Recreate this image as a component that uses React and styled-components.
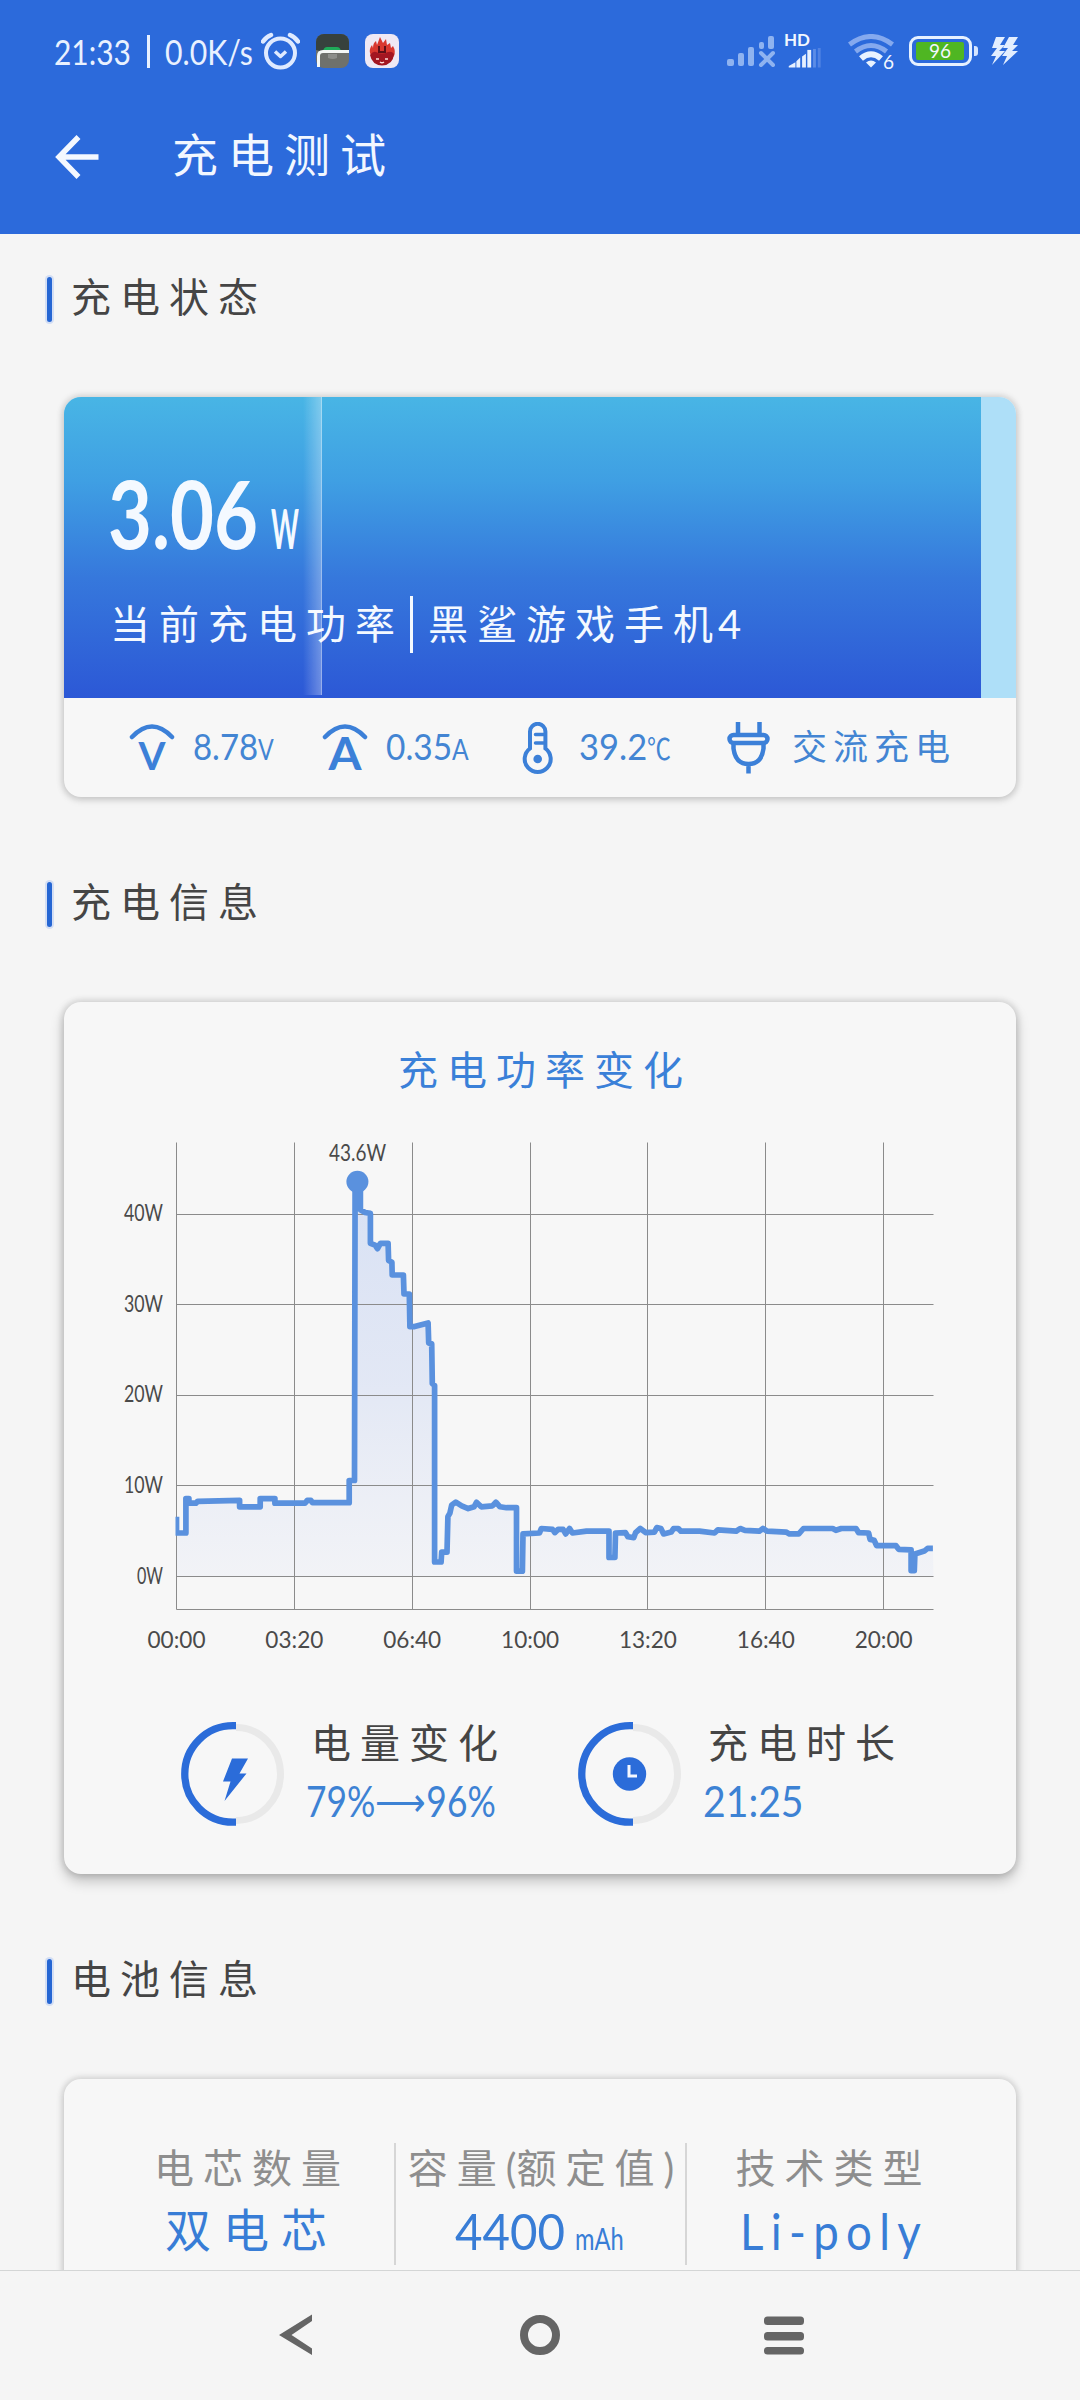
import React, { useLayoutEffect, useRef, useState } from 'react'
import styled, { createGlobalStyle } from 'styled-components'

const GlobalStyle = createGlobalStyle`
  * {
    box-sizing: border-box;
  }
  body {
    margin: 0;
    background: #f5f5f5;
    font-family: Lato, "Noto Sans CJK SC", sans-serif;
  }
`

const Screen = styled.div`
  width: 1080px;
  height: 2400px;
  display: flex;
  flex-direction: column;
  background: #f5f5f5;
  overflow: hidden;
`

/* header */

const Header = styled.header`
  height: 234px;
  flex-shrink: 0;
  background: #2c6adb;
  color: #f2f7ff;
`

const StatusBar = styled.div`
  height: 104px;
  padding: 0 61px 2px 54px;
  display: flex;
  align-items: center;
`

const StatusText = styled.div`
  display: flex;
  align-items: center;
  font-size: 35px;
  line-height: 50px;
  color: #e9f1ff;
`

const StatusDivider = styled.span`
  width: 3px;
  height: 33px;
  margin: 0 15px 0 16px;
  background: #e9f1ff;
`

const StatusIcons = styled.div`
  display: flex;
  align-items: center;
  margin-left: ${(props) => props.$left || '8px'};
  gap: 16px;
`

const SignalGroup = styled.div`
  display: flex;
  flex-direction: column;
  width: 38px;
  height: 34px;
  margin-left: -6px;
`

const HdTag = styled.span`
  height: 12px;
  font-size: 17px;
  line-height: 12px;
  font-weight: 700;
  margin-bottom: 2px;
  margin-left: -1px;
`

const WifiGroup = styled.div`
  display: flex;
  position: relative;
  margin-left: 9px;
`

const WifiGeneration = styled.span`
  position: absolute;
  right: 0;
  bottom: -4px;
  font-size: 19px;
  line-height: 20px;
`

const Battery = styled.div`
  display: flex;
  align-items: center;
  margin: 0 -3px 0 -1px;
`

const BatteryBody = styled.div`
  width: 63px;
  height: 30px;
  padding: 3px;
  border: 3px solid #e6f1ff;
  border-radius: 9px;
`

const BatteryLevel = styled.div`
  width: 48px;
  height: 18px;
  margin-left: 1px;
  border-radius: 2px;
  background: #4fb622;
  font-size: 19px;
  line-height: 18px;
  text-align: center;
`

const BatteryTip = styled.div`
  width: 4px;
  height: 10px;
  margin-left: 2px;
  border-radius: 0 3px 3px 0;
  background: #d5e5ff;
`

const TitleBar = styled.div`
  height: 106px;
  padding-left: 55px;
  display: flex;
  align-items: center;
`

const PageTitle = styled.h1`
  margin: -4px 0 0 73px;
  font-size: 46px;
  line-height: 60px;
  font-weight: 400;
  letter-spacing: 10px;
`

/* sections */

const Content = styled.main`
  flex: 1;
  min-height: 0;
  padding: 43px 64px 0;
  display: flex;
  flex-direction: column;
  overflow: hidden;
`

const SectionTitle = styled.h2`
  flex-shrink: 0;
  display: flex;
  align-items: center;
  height: 45px;
  margin: 0 0 75px -17px;
  font-size: 40px;
  line-height: 40px;
  font-weight: 400;
  letter-spacing: 9px;
  color: #454545;

  &::before {
    content: '';
    width: 5px;
    height: 45px;
    margin-right: 19px;
    border-radius: 3px;
    background: #2566d3;
    box-shadow: 0 0 0 2px #d3def4;
  }
`

const SectionText = styled.span`
  margin-top: -5px;
`

const Card = styled.section`
  flex-shrink: 0;
  height: ${(props) => props.$height}px;
  margin-bottom: 85px;
  border-radius: 17px;
  background: #f7f7f7;
  box-shadow: 0 0 6px 2px rgba(0, 0, 0, 0.13),
    0 ${(props) => (props.$raised ? '7px 14px' : '3px 9px')} rgba(0, 0, 0, ${(props) => (props.$raised ? 0.22 : 0.1)});
  overflow: hidden;
`

/* status card */

const PowerTrack = styled.div`
  height: 301px;
  background: #aedff8;
`

const PowerLevel = styled.div`
  position: relative;
  width: 917px;
  height: 301px;
  padding: 66px 0 0 44px;
  background: linear-gradient(#48b5e5 0%, #3f9fe3 28%, #3678dc 60%, #2c58d6 100%);
  color: #f4f9ff;
`

const Shine = styled.div`
  position: absolute;
  top: 0;
  left: 239px;
  width: 19px;
  height: 298px;
  border-right: 1px solid rgba(255, 255, 255, 0.5);
  background: linear-gradient(90deg, rgba(255, 255, 255, 0), rgba(255, 255, 255, 0.3));
`

const PowerValue = styled.div`
  display: flex;
  align-items: baseline;
  height: 100px;
  line-height: 100px;
  font-size: 94px;
  font-weight: 700;
`

const PowerUnit = styled.span`
  margin-left: 13px;
  font-size: 55px;
`

const PowerLabel = styled.div`
  display: flex;
  align-items: center;
  height: 56px;
  margin-top: 33px;
  margin-left: 2px;
  font-size: 40px;
  line-height: 56px;
  letter-spacing: 9px;
  white-space: nowrap;
`

const LabelBar = styled.span`
  width: 3px;
  height: 57px;
  margin: 0 15px 0 6px;
  background: #f4f9ff;
`

const Tight = styled.span`
  letter-spacing: ${(props) => props.$gap || 0};
`

const Metrics = styled.div`
  height: 99px;
  padding-left: 65px;
  display: grid;
  grid-template-columns: 193px 193px 211px 1fr;
  align-items: center;
`

const Metric = styled.div`
  display: flex;
  align-items: center;
  gap: 18px;
  font-size: 36px;
  line-height: 50px;
  color: #4385d3;
`

const MetricValue = styled.div`
  display: flex;
  align-items: baseline;
`

const MetricText = styled.div`
  margin: -3px 0 0 2px;
  font-size: 35px;
  letter-spacing: 6px;
`

const MetricUnit = styled.span`
  font-size: 29px;
`

const GaugeSvg = styled.svg`
  margin-bottom: -10px;
`

/* chart card */

const ChartTitle = styled.h3`
  margin: 0;
  padding: 40px 0 0 10px;
  font-size: 40px;
  line-height: 56px;
  font-weight: 400;
  letter-spacing: 9px;
  text-align: center;
  color: #3a80d8;
`

const ChartSvg = styled.svg`
  display: block;
  margin: 32px 0 0 50px;
  font-size: 24px;
  fill: #4a4a4a;
`

const Stats = styled.div`
  display: grid;
  grid-template-columns: 397px 1fr;
  padding: 55px 0 0 117px;
`

const Stat = styled.div`
  display: flex;
`

const RingSvg = styled.svg`
  margin: 7px 21px 0 0;
`

const StatLabel = styled.div`
  padding-left: 5px;
  font-size: 40px;
  line-height: 56px;
  letter-spacing: 9px;
  color: #454545;
`

const StatValue = styled.div`
  display: flex;
  font-size: 43px;
  line-height: 60px;
  color: #3d82d4;
`

/* battery info card */

const InfoGrid = styled.div`
  display: grid;
  grid-template-columns: 290px 291px 291px;
  padding: 64px 0 0 40px;
`

const InfoCell = styled.div`
  height: 122px;
  padding-left: ${(props) => props.$inset || 0}px;
  text-align: center;
  white-space: nowrap;

  & + & {
    border-left: 2px solid #d6d6d6;
  }
`

const InfoLabel = styled.div`
  font-size: 40px;
  line-height: 51px;
  letter-spacing: 9px;
  color: #8e8e8e;
`

const InfoValue = styled.div`
  display: flex;
  justify-content: center;
  align-items: baseline;
  margin-top: 6px;
  font-size: ${(props) => props.$size || '50px'};
  line-height: ${(props) => props.$line || '62px'};
  letter-spacing: ${(props) => props.$spacing || 0};
  color: #387dd6;
`

const InfoUnit = styled.span`
  margin: 0 4px 0 10px;
  font-size: 30px;
`

/* navigation */

const NavBar = styled.nav`
  flex-shrink: 0;
  height: 130px;
  padding-bottom: 2px;
  border-top: 1px solid #d4d6d6;
  display: flex;
  justify-content: center;
  align-items: center;
  gap: 204px;
  color: #656565;
`

const FitBox = styled.span`
  display: inline-block;
  width: ${(props) => props.$width}px;
  white-space: nowrap;
  text-align: left;
`

const FitInner = styled.span`
  display: inline-block;
  transform-origin: 0 50%;
`

// narrows the text until it takes exactly the given width
function FitText({ width, children }) {
  const ref = useRef(null)
  const [scale, setScale] = useState(1)

  useLayoutEffect(() => {
    setScale(width / ref.current.offsetWidth)
  }, [width])

  return (
    <FitBox $width={width}>
      <FitInner ref={ref} style={{ transform: `scaleX(${scale})` }}>{children}</FitInner>
    </FitBox>
  )
}

const AlarmIcon = () => (
  <svg width="39" height="38" viewBox="0 0 39 38" fill="none" stroke="#dfeaff">
    <circle cx="19.5" cy="21" r="14.5" strokeWidth="4" />
    <path d="M14 19.5l5.5 5 5.5-5" strokeWidth="3.5" strokeLinejoin="round" />
    <path d="M2 9.5Q5 5 10 3M37 9.5Q34 5 29 3" strokeWidth="4.5" strokeLinecap="round" />
  </svg>
)

const CardAppIcon = () => (
  <svg width="33" height="34" viewBox="0 0 33 34">
    <rect width="33" height="34" rx="8" fill="#6f716c" />
    <path d="M0 16V8a8 8 0 0 1 8-8h17a8 8 0 0 1 8 8v9H4z" fill="#37413d" />
    <path d="M7 17q1-4 4-4h10q3 0 4 4z" fill="#1faa59" />
    <path d="M12 20h9v4q-4 2-9 0z" fill="#8c8e8a" />
    <path d="M2.5 33V22q0-4.500 4.500-4.500h26" fill="none" stroke="#f4f7f5" strokeWidth="3" />
  </svg>
)

const FlameAppIcon = () => (
  <svg width="34" height="34" viewBox="0 0 34 34">
    <rect width="34" height="34" rx="8" fill="#efe9f4" />
    <path d="M5 19q-1-4 2-8l1 3q0-5 3-7l1 4 3-8 3 6 3-4 1 6 3-2 1 5 2-2q3 5 1 10a13 11 0 0 1-24-3z" fill="#d8382f" />
    <path d="M5 21q3-4 6-3 6 3 12 0 4-1 6 2-1 11-12 11.500Q7 31 5 21z" fill="#a31621" />
    <path d="M14 12v6h6v-6M15 17v2M19 17v2" stroke="#5d1018" strokeWidth="2" fill="none" />
    <path d="M11 25h3M20 25h3M15 28q2 1.500 4 0" stroke="#ffdcd8" strokeWidth="1.500" fill="none" />
  </svg>
)

const NoSignalIcon = () => (
  <svg width="48" height="32" viewBox="0 0 48 32" fill="#8fb3f0">
    <rect x="0" y="24" width="7" height="7" rx="2" />
    <rect x="11" y="18" width="6" height="13" rx="2" />
    <rect x="21" y="12" width="6" height="19" rx="2" />
    <rect x="32" y="7" width="5" height="7" rx="2" />
    <rect x="41" y="1" width="6" height="13" rx="2" />
    <path d="M34 18l12 12M46 18L34 30" stroke="#8fb3f0" strokeWidth="4" strokeLinecap="round" />
  </svg>
)

const SignalIcon = () => (
  <svg width="38" height="21" viewBox="0 0 38 21" fill="#e6f0ff">
    <path d="M3 20.500v-1.500l7-4v5.500z" />
    <path d="M11 14l4-4v10.500h-4zM17 9l4-3v14.500h-4z" />
    <rect x="22.500" y="2" width="4" height="18.500" />
    <rect x="28.500" y="1" width="3" height="19.500" fill="#5c8de6" />
    <rect x="33.500" y="-2" width="3" height="22.500" fill="#5082e3" />
  </svg>
)

const WifiIcon = () => (
  <svg width="46" height="34" viewBox="0 0 46 34" fill="none" stroke="#85a9ee" strokeWidth="5">
    <path d="M1.500 10.500Q23-5.500 44.500 10.500" />
    <path d="M7.500 17.500Q23 5.500 38.500 17.500" />
    <path d="M13 24.500Q23 16 33 24.500" stroke="#e9f2ff" strokeWidth="6" />
    <path d="M18 28.500q5-4 10 0l-5 5z" fill="#e9f2ff" stroke="none" />
  </svg>
)

const ChargeIcon = () => (
  <svg width="28" height="29" viewBox="0 0 28 29" fill="#e3eeff">
    <path d="M5 0h9L9 8h5L8 14h6L1 28l4-9H0l6-8H1z" />
    <path d="M18 0h9l-5 8h5l-6 6h6L12 28l4-9h-5l6-8h-5z" />
  </svg>
)

const BackArrow = () => (
  <svg width="44" height="44" viewBox="0 0 44 44" fill="none" stroke="#f4f8ff" strokeWidth="5.500">
    <path d="M23.500 2L4 22l19.500 20M4 22h39.500" />
  </svg>
)

// arc over a letter, used for volts and amps
const GaugeIcon = ({ letter }) => (
  <GaugeSvg width="46" height="60" viewBox="0 0 46 60">
    <path d="M3 14Q23-7 43 14" fill="none" stroke="#3c80d8" strokeWidth="4.500" strokeLinecap="round" />
    <text
      x="23"
      y="47"
      textAnchor="middle"
      fontSize={letter === 'A' ? 45 : 38}
      fontWeight="700"
      fill="#3c80d8"
      textLength={letter === 'A' ? 33 : 27}
      lengthAdjust="spacingAndGlyphs"
    >
      {letter}
    </text>
  </GaugeSvg>
)

const ThermometerIcon = () => (
  <svg width="46" height="52" viewBox="0 0 46 52" fill="none" stroke="#3c80d8" strokeWidth="4">
    <path d="M15 26.500V9.500a7.700 7.700 0 0 1 15.400 0v17a13 13 0 1 1-15.400 0z" />
    <circle cx="22.700" cy="37" r="4.300" fill="#3c80d8" stroke="none" />
    <path d="M20.500 12.500h8M20.500 21h8" strokeWidth="3.500" strokeLinecap="round" />
  </svg>
)

const PlugIcon = () => (
  <svg width="46" height="52" viewBox="0 0 46 52" fill="none" stroke="#3c80d8" strokeWidth="4.500">
    <path d="M12 0v12M33.500 0v12" />
    <rect x="3.500" y="13" width="38" height="8" rx="4" />
    <path d="M7.500 21.500v5q2 15.500 15 15.500t15-15.500v-5M22.500 42v9.500" />
  </svg>
)

// [seconds since start, watts]
const samples = [
  [0, 6.6], [0, 4.8], [16, 4.8], [16, 8.6], [21, 8.6], [21, 8.1], [33, 8.1], [36, 8.3], [107, 8.4], [107, 7.7],
  [142, 7.7], [142, 8.6], [167, 8.6], [167, 8.1], [218, 8.1], [222, 8.4], [228, 8.4], [231, 8.15], [293, 8.15],
  [293, 10.6], [302, 10.6], [303, 43.6], [312, 43.6], [312, 40.5], [320, 40.2], [329, 40.1], [329, 36.8],
  [337, 36.6], [341, 36.2], [346, 36.8], [359, 36.8], [360, 34.9], [365.5, 34.7], [366, 33.3], [385, 33.3],
  [386, 31.2], [395, 31.2], [396, 27.6], [404, 27.6], [427, 28], [428, 25.8], [433, 25.7], [434, 21.3],
  [438, 21.1], [438, 1.6], [449, 1.6], [450, 2.7], [459, 2.7], [460.5, 6.6], [464, 7], [467, 7.9], [474, 8.2],
  [484, 7.8], [495, 7.5], [505, 7.7], [509, 8.2], [517, 7.7], [536, 7.8], [542, 8.2], [549, 7.7], [560, 7.6],
  [577, 7.6], [577, 0.6], [587, 0.6], [588, 4.7], [616, 4.8], [619, 5.3], [638, 5.2], [642, 4.85], [647.5, 5.2],
  [656, 5.2], [660.5, 4.7], [667, 5.3], [672, 4.8], [695.5, 5], [734, 5], [734, 2.1], [744, 2.1], [745, 4.8],
  [762, 4.85], [766, 4.4], [776, 4.3], [779, 4.85], [787, 5.3], [796, 4.85], [811, 4.9], [815, 5.4], [822, 5.3],
  [826.5, 4.7], [839.5, 4.9], [843.5, 5.3], [851.5, 5.3], [856, 5], [887.5, 5], [913, 4.8], [918.5, 5.15],
  [950, 5], [956.5, 5.3], [964.5, 5.1], [989, 5], [995, 5.3], [1002, 5], [1034.5, 4.9], [1040, 4.7],
  [1056, 4.7], [1064, 5.3], [1113.5, 5.3], [1119, 5.1], [1128, 5.3], [1153, 5.3], [1157.5, 4.85],
  [1174.5, 4.8], [1177, 4.1], [1184, 4], [1188, 3.4], [1221, 3.4], [1225.5, 3], [1246.5, 2.95], [1246.5, 0.65],
  [1252, 0.65], [1253, 2.5], [1269, 2.8], [1274.5, 3.1], [1283.5, 3.1],
]

const left = 62.5
const right = 819.5
const top = 12.5
const bottom = 479.5
const xOf = (seconds) => left + seconds * 0.5893
const yOf = (watts) => 446.5 - watts * 9.055

const times = ['00:00', '03:20', '06:40', '10:00', '13:20', '16:40', '20:00']
const watts = [40, 30, 20, 10, 0]

function PowerChart() {
  const points = samples.map(([s, w]) => `${xOf(s).toFixed(1)},${yOf(w).toFixed(1)}`).join(' ')

  return (
    <ChartSvg width="850" height="530" viewBox="0 0 850 530">
      <defs>
        <linearGradient id="area" gradientUnits="userSpaceOnUse" x1="0" y1={yOf(43.6)} x2="0" y2={yOf(0)}>
          <stop offset="0" stopColor="#5c8ae8" stopOpacity="0.2" />
          <stop offset="0.5" stopColor="#6b8fe8" stopOpacity="0.15" />
          <stop offset="1" stopColor="#8aa4ee" stopOpacity="0.05" />
        </linearGradient>
        <clipPath id="plot">
          <rect x={left - 1} y="0" width={right - left + 1} height={bottom} />
        </clipPath>
      </defs>
      <polygon points={`${left},${yOf(0)} ${points} ${right},${yOf(0)}`} fill="url(#area)" />
      <g stroke="#8b8b8b" strokeWidth="1">
        {times.map((time, i) => {
          const x = Math.floor(xOf(i * 200)) + 0.5
          return <line key={time} x1={x} x2={x} y1={top} y2={bottom} />
        })}
        {watts.map((w) => {
          const y = Math.floor(yOf(w)) + 0.5
          return <line key={w} x1={left} x2={right} y1={y} y2={y} />
        })}
        <line x1={left} x2={right} y1={bottom} y2={bottom} />
      </g>
      <g clipPath="url(#plot)">
        <polyline points={points} fill="none" stroke="#5a91de" strokeWidth="5.700" strokeLinejoin="round" />
      </g>
      <circle cx={xOf(307)} cy={yOf(43.6)} r="11" fill="#5a91de" />
      <text x="243.500" y="31" textAnchor="middle" textLength="57" lengthAdjust="spacingAndGlyphs">43.6W</text>
      {watts.map((w) => (
        <text key={w} x="49" y={yOf(w) + 7} textAnchor="end" textLength={w ? 39 : 26} lengthAdjust="spacingAndGlyphs">{`${w}W`}</text>
      ))}
      {times.map((time, i) => (
        <text key={time} x={xOf(i * 200)} y="518" textAnchor="middle" textLength="58" lengthAdjust="spacingAndGlyphs">{time}</text>
      ))}
    </ChartSvg>
  )
}

const Ring = ({ children }) => (
  <RingSvg width="104" height="104" viewBox="0 0 104 104">
    <path d="M55 5.500a44.500 46.500 0 0 1 0 93" fill="none" stroke="#e9e9e9" strokeWidth="7" />
    <path d="M55 3.700H52a48.200 48.200 0 0 0 0 96.500H55" fill="none" stroke="#2b6cd9" strokeWidth="7.300" />
    {children}
  </RingSvg>
)

function StatusCard() {
  return (
    <Card $height={400}>
      <PowerTrack>
        <PowerLevel>
          <Shine />
          <PowerValue>
            <FitText width={150}>3.06</FitText>
            <PowerUnit><FitText width={28}>W</FitText></PowerUnit>
          </PowerValue>
          <PowerLabel>
            当前充电功率<LabelBar />黑鲨游戏手<Tight $gap="5px">机</Tight><Tight><FitText width={23}>4</FitText></Tight>
          </PowerLabel>
        </PowerLevel>
      </PowerTrack>
      <Metrics>
        <Metric>
          <GaugeIcon letter="V" />
          <MetricValue>
            <FitText width={65}>8.78</FitText>
            <MetricUnit><FitText width={16}>V</FitText></MetricUnit>
          </MetricValue>
        </Metric>
        <Metric>
          <GaugeIcon letter="A" />
          <MetricValue>
            <FitText width={66}>0.35</FitText>
            <MetricUnit><FitText width={17}>A</FitText></MetricUnit>
          </MetricValue>
        </Metric>
        <Metric>
          <ThermometerIcon />
          <MetricValue>
            <FitText width={68}>39.2</FitText>
            <MetricUnit><FitText width={24}>℃</FitText></MetricUnit>
          </MetricValue>
        </Metric>
        <Metric>
          <PlugIcon />
          <MetricText>交流充电</MetricText>
        </Metric>
      </Metrics>
    </Card>
  )
}

function ChartCard() {
  return (
    <Card $height={872} $raised>
      <ChartTitle>充电功率变化</ChartTitle>
      <PowerChart />
      <Stats>
        <Stat>
          <Ring>
            <path d="M51 36.500h16l-8.500 15h7L43.500 79l6-19.500h-7.500z" fill="#2b6cd9" />
          </Ring>
          <div>
            <StatLabel>电量变化</StatLabel>
            <StatValue><FitText width={190}>79%⟶96%</FitText></StatValue>
          </div>
        </Stat>
        <Stat>
          <Ring>
            <circle cx="51.500" cy="52" r="16.700" fill="#2b6cd9" />
            <path d="M51 43v11h8" fill="none" stroke="#f5f8ff" strokeWidth="3" />
          </Ring>
          <div>
            <StatLabel>充电时长</StatLabel>
            <StatValue><FitText width={101}>21:25</FitText></StatValue>
          </div>
        </Stat>
      </Stats>
    </Card>
  )
}

function BatteryCard() {
  return (
    <Card $height={400}>
      <InfoGrid>
        <InfoCell $inset={6}>
          <InfoLabel>电芯数量</InfoLabel>
          <InfoValue $size="46px" $line="59px" $spacing="12px">双电芯</InfoValue>
        </InfoCell>
        <InfoCell $inset={1}>
          <InfoLabel>容量<Tight>(</Tight>额定值<Tight>)</Tight></InfoLabel>
          <InfoValue>
            <FitText width={110}>4400</FitText>
            <InfoUnit><FitText width={49}>mAh</FitText></InfoUnit>
          </InfoValue>
        </InfoCell>
        <InfoCell $inset={4}>
          <InfoLabel>技术类型</InfoLabel>
          <InfoValue $spacing="8px"><FitText width={188}>Li-poly</FitText></InfoValue>
        </InfoCell>
      </InfoGrid>
    </Card>
  )
}

export default function App() {
  return (
    <Screen>
      <GlobalStyle />
      <Header>
        <StatusBar>
          <StatusText>
            <FitText width={77}>21:33</FitText>
            <StatusDivider />
            <FitText width={88}>0.0K/s</FitText>
          </StatusText>
          <StatusIcons>
            <AlarmIcon />
            <CardAppIcon />
            <FlameAppIcon />
          </StatusIcons>
          <StatusIcons $left="auto">
            <NoSignalIcon />
            <SignalGroup>
              <HdTag>HD</HdTag>
              <SignalIcon />
            </SignalGroup>
            <WifiGroup>
              <WifiIcon />
              <WifiGeneration>6</WifiGeneration>
            </WifiGroup>
            <Battery>
              <BatteryBody>
                <BatteryLevel>96</BatteryLevel>
              </BatteryBody>
              <BatteryTip />
            </Battery>
            <ChargeIcon />
          </StatusIcons>
        </StatusBar>
        <TitleBar>
          <BackArrow />
          <PageTitle>充电测试</PageTitle>
        </TitleBar>
      </Header>

      <Content>
        <SectionTitle><SectionText>充电状态</SectionText></SectionTitle>
        <StatusCard />
        <SectionTitle><SectionText>充电信息</SectionText></SectionTitle>
        <ChartCard />
        <SectionTitle><SectionText>电池信息</SectionText></SectionTitle>
        <BatteryCard />
      </Content>

      <NavBar>
        <svg width="40" height="42" viewBox="0 0 40 42">
          <path d="M3 21L36 0.500V7L15.500 21 36 34.500V41z" fill="currentColor" />
        </svg>
        <svg width="40" height="40" viewBox="0 0 40 40">
          <circle cx="20" cy="20" r="16" fill="none" stroke="currentColor" strokeWidth="8" />
        </svg>
        <svg width="40" height="40" viewBox="0 0 40 40" fill="currentColor">
          <rect y="1.500" width="40" height="8.500" rx="3.500" />
          <rect y="17" width="40" height="8.500" rx="3.500" />
          <rect y="32" width="40" height="7.500" rx="3.500" />
        </svg>
      </NavBar>
    </Screen>
  )
}
